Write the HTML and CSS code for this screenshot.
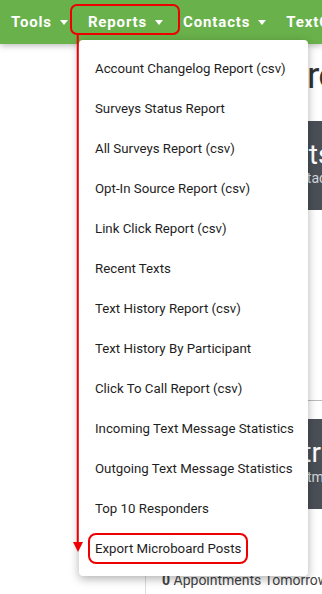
FILE: index.html
```html
<!DOCTYPE html>
<html lang="en">
<head>
<meta charset="utf-8">
<title>Reports menu</title>
<link rel="stylesheet" href="styles.css">
</head>
<body>
<nav class="topbar">
  <div class="nav-item">Tools<span class="caret"></span></div>
  <div class="nav-item">Reports<span class="caret"></span></div>
  <div class="nav-item">Contacts<span class="caret"></span></div>
  <div class="nav-item">TextChat<span class="caret"></span></div>
</nav>

<div class="page">
  <aside class="sidebar"></aside>
  <main class="content">
    <h1 class="title">Texting Program</h1>
    <div class="card">
      <div class="card-big">Hits</div>
      <div class="card-small">Contacts</div>
    </div>
    <div class="panel"></div>
    <div class="card card-wide">
      <div class="card-big">Metrics</div>
      <div class="card-small">Appointments</div>
    </div>
    <p class="stat"><b>0</b> Appointments Tomorrow</p>
  </main>
</div>

<ul class="dropdown">
  <li>Account Changelog Report (csv)</li>
  <li>Surveys Status Report</li>
  <li>All Surveys Report (csv)</li>
  <li>Opt-In Source Report (csv)</li>
  <li>Link Click Report (csv)</li>
  <li>Recent Texts</li>
  <li>Text History Report (csv)</li>
  <li>Text History By Participant</li>
  <li>Click To Call Report (csv)</li>
  <li>Incoming Text Message Statistics</li>
  <li>Outgoing Text Message Statistics</li>
  <li>Top 10 Responders</li>
  <li class="marked"><span class="mark-box">Export Microboard Posts</span></li>
</ul>

<div class="reports-box"></div>
<svg class="arrow" width="16" height="520" viewBox="0 0 16 520">
  <line x1="7.75" y1="0" x2="7.75" y2="510" stroke="#ee0000" stroke-width="2"/>
  <polygon points="3,508 13,508 8,518" fill="#ee0000"/>
</svg>
</body>
</html>
```

FILE: styles.css
```css
html, body {
  margin: 0;
  height: 100%;
  overflow: hidden;
}
body {
  font-family: Roboto, "Liberation Sans", sans-serif;
  background: #fff;
  position: relative;
}

.topbar {
  height: 44px;
  background: #69b14a;
  display: flex;
  align-items: center;
  padding-left: 1px;
  box-shadow: 0 2px 6px rgba(0, 0, 0, 0.25);
  position: relative;
  z-index: 1;
  white-space: nowrap;
}
.nav-item {
  display: flex;
  align-items: center;
  gap: 8px;
  padding: 0 10px;
  color: #fff;
  font-weight: 700;
  font-size: 15px;
  letter-spacing: 0.85px;
  line-height: 44px;
  flex: none;
}
.caret {
  width: 0;
  height: 0;
  border-left: 4.5px solid transparent;
  border-right: 4.5px solid transparent;
  border-top: 5px solid #fff;
  margin-top: 1px;
}

.page {
  display: flex;
}
.sidebar {
  width: 145px;
  flex: none;
}
.content {
  width: 500px;
  flex: none;
  border-left: 1px solid #dcdcdc;
  padding: 9px 16px 0;
  min-height: 560px;
}
.title {
  margin: 0;
  font-size: 37px;
  letter-spacing: -0.9px;
  font-weight: 400;
  line-height: 45.6px;
  color: #333;
  white-space: nowrap;
}
.card {
  margin-top: 22px;
  background: #4a4f57;
  color: #fff;
  padding: 19px 16px 23px 120px;
  border-radius: 4px;
}
.card-wide {
  margin-top: 18px;
  padding-left: 101px;
}
.card-big {
  font-size: 28px;
  line-height: 30.8px;
  white-space: nowrap;
}
.card-small {
  font-size: 14px;
  line-height: 16.8px;
  color: #d5d7da;
  white-space: nowrap;
}
.panel {
  height: 190px;
  border-bottom: 1px solid #bbb;
}
.stat {
  margin: 61px 0 0;
  font-size: 14px;
  line-height: 20px;
  color: #444;
  white-space: nowrap;
}

.dropdown {
  position: absolute;
  left: 79px;
  top: 40px;
  width: 229px;
  margin: 0;
  padding: 8px 0;
  list-style: none;
  background: #fff;
  border-radius: 4px;
  box-shadow: 0 3px 10px rgba(0, 0, 0, 0.3);
  z-index: 2;
}
.dropdown li {
  height: 40px;
  display: flex;
  align-items: center;
  padding-left: 16px;
  font-size: 13.25px;
  font-weight: 400;
  color: #1e1e1e;
  white-space: nowrap;
}
.dropdown li.marked {
  padding-left: 9px;
}
.mark-box {
  border: 2px solid #ee0000;
  border-radius: 8px;
  padding: 0 5px;
  line-height: 27px;
}

.reports-box {
  position: absolute;
  left: 70px;
  top: 4px;
  width: 110px;
  height: 31px;
  box-sizing: border-box;
  border: 2px solid #ee0000;
  border-radius: 7px;
  z-index: 3;
}
.arrow {
  position: absolute;
  left: 70px;
  top: 34px;
  z-index: 3;
}
```
